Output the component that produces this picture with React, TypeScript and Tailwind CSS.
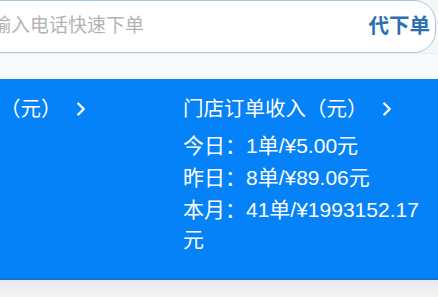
import { ChevronRight } from 'lucide-react'

const font = { fontFamily: '"Liberation Sans", "Noto Sans CJK SC", sans-serif' }

type Stat = { label: string; value: string }

const storeStats: Stat[] = [
  { label: '今日：', value: '1单/¥5.00元' },
  { label: '昨日：', value: '8单/¥89.06元' },
  { label: '本月：', value: '41单/¥1993152.17元' },
]

function Column({ title, stats }: { title: string; stats: Stat[] }) {
  return (
    <div className="w-[265px] shrink-0 pr-[20px]">
      <div className="flex items-center gap-[8px] text-[20.5px] leading-[26px] text-white">
        <span className="whitespace-nowrap">{title}</span>
        <ChevronRight className="h-[22px] w-[22px]" strokeWidth={2.6} />
      </div>
      <div className="mt-[9px] space-y-[2px]">
        {stats.map((s) => (
          <p key={s.label} className="text-[21px] leading-[30px] text-white">
            {s.label}
            {s.value}
          </p>
        ))}
      </div>
    </div>
  )
}

export default function App() {
  return (
    <div className="h-[297px] w-[438px] overflow-hidden bg-[#f6f7f7]" style={font}>
      <div className="-ml-[40px] mr-[2px] flex h-[53px] items-center justify-between rounded-[22px] border border-[#a9c6df] bg-white pl-[31px] pr-[5px]">
        <span className="text-[19px] text-[#b3b3b3]">输入电话快速下单</span>
        <span className="text-[20.5px] font-bold text-[#2d6fb3]">代下单</span>
      </div>
      <div className="h-[26px] border-t border-[#e3eef6] bg-[#f7f9fa]" />
      <div className="flex h-[201px] border-b-2 border-[#1d6ed0] bg-[#0582f8] pt-[17px]">
        <div className="-ml-[82px] flex">
          <Column title="线上收入（元）" stats={[]} />
          <Column title="门店订单收入（元）" stats={storeStats} />
        </div>
      </div>
      <div className="h-[17px] bg-gradient-to-b from-[#e3e8ee] to-[#f6f5f2]" />
    </div>
  )
}
